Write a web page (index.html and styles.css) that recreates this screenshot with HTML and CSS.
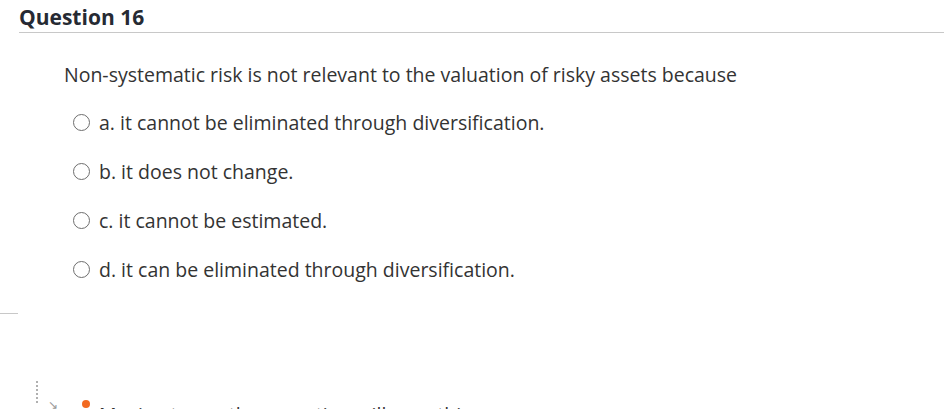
FILE: index.html
```html
<!DOCTYPE html>
<html>
<head>
<meta charset="utf-8">
<link rel="stylesheet" href="styles.css">
</head>
<body>
<div class="page">
  <div class="q-header">
    <h2 class="q-title">Question 16</h2>
  </div>
  <div class="q-body">
    <p class="q-text">Non-systematic risk is not relevant to the valuation of risky assets because</p>
    <ul class="options">
      <li class="option"><span class="radio"></span><span class="label">a. it cannot be eliminated through diversification.</span></li>
      <li class="option"><span class="radio"></span><span class="label">b. it does not change.</span></li>
      <li class="option"><span class="radio"></span><span class="label">c. it cannot be estimated.</span></li>
      <li class="option"><span class="radio"></span><span class="label">d. it can be eliminated through diversification.</span></li>
    </ul>
  </div>
  <div class="divider"></div>
  <div class="footer">
    <span class="dots"></span>
    <span class="arrow">&#8600;</span>
    <span class="warn"></span>
    <span class="foot-text">Moving to another question will save this response.</span>
  </div>
</div>
</body>
</html>
```
FILE: styles.css
```css
html, body {
  margin: 0;
  padding: 0;
  background: #fff;
}
body {
  font-family: "Open Sans", "Noto Sans", sans-serif;
  color: #333;
  width: 945px;
  height: 409px;
  overflow: hidden;
}
.page {
  display: flex;
  flex-direction: column;
}
.q-header {
  margin-left: 19px;
  margin-right: 1px;
  border-bottom: 1px solid #c8c8c8;
  height: 32px;
}
.q-title {
  margin: 0;
  padding-top: 3px;
  font-size: 21px;
  line-height: 28px;
  font-weight: 700;
  color: #262a33;
}
.q-body {
  padding-left: 64px;
  padding-top: 28px;
}
.q-text {
  margin: 0;
  font-size: 19.5px;
  line-height: 28px;
  color: #333;
}
.options {
  list-style: none;
  margin: 0;
  padding: 0 0 0 9px;
  margin-top: 9px;
}
.option {
  display: flex;
  align-items: center;
  height: 49px;
  font-size: 19.5px;
  color: #333;
}
.radio {
  width: 15px;
  height: 15px;
  border: 1.5px solid #6e6e6e;
  border-radius: 50%;
  box-sizing: content-box;
  flex: none;
  margin-right: 9px;
}
.divider {
  width: 18px;
  height: 1px;
  background: #c8c8c8;
  margin-top: 19px;
}
.footer {
  display: flex;
  align-items: flex-start;
  margin-top: 67px;
  height: 40px;
}
.dots {
  width: 0;
  height: 22px;
  border-left: 2px dotted #b0b0b0;
  margin-left: 36px;
}
.arrow {
  font-size: 12px;
  color: #999;
  margin-left: 10px;
  margin-top: 15px;
}
.warn {
  width: 8px;
  height: 8px;
  border-radius: 50%;
  background: #f26a21;
  margin-left: 24px;
  margin-top: 19px;
}
.foot-text {
  font-size: 19.5px;
  color: #333;
  margin-left: 9px;
  margin-top: 20px;
  white-space: nowrap;
}
```
